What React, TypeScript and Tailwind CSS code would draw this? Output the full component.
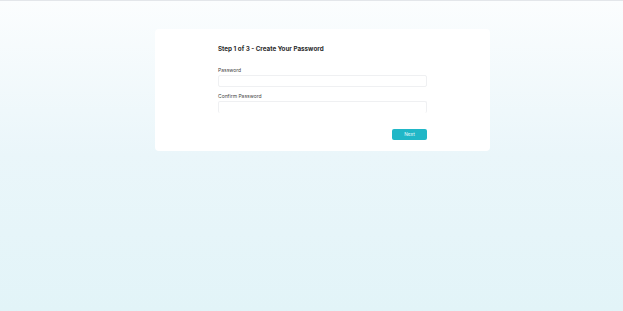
export default function App() {
  return (
    <div
      className="w-[623px] h-[311px] border-t border-[#e3e6ea] bg-gradient-to-b from-[#fbfdfe] via-[#eaf6fa] to-[#e2f4f8] flex pl-[155px] pt-[28px]"
      style={{ fontFamily: "Inter, 'Liberation Sans', sans-serif" }}
    >
      <div className="w-[335px] h-[122px] bg-white rounded-[4px] px-[63px] pt-[16px] flex flex-col">
        <h1 className="text-[6.3px] font-bold text-[#2a2a2a] leading-[9px] m-0">
          Step 1 of 3 - Create Your Password
        </h1>
        <label className="mt-[13px] text-[5px] text-[#444] leading-[7px]">Password</label>
        <input
          type="password"
          className="mt-[1px] h-[12px] w-full border border-[#eff0f2] rounded-[2px] outline-none"
        />
        <label className="mt-[6px] text-[5px] text-[#444] leading-[7px]">Confirm Password</label>
        <input
          type="password"
          className="mt-[1px] h-[12px] w-full border border-[#eff0f2] border-b-0 rounded-[2px] outline-none"
        />
        <div className="flex justify-end mt-[16px]">
          <button className="w-[35px] h-[11px] bg-[#20b7c7] text-[#e8fafc] text-[4.8px] rounded-[2px] leading-[11px]">
            Next
          </button>
        </div>
      </div>
    </div>
  );
}
